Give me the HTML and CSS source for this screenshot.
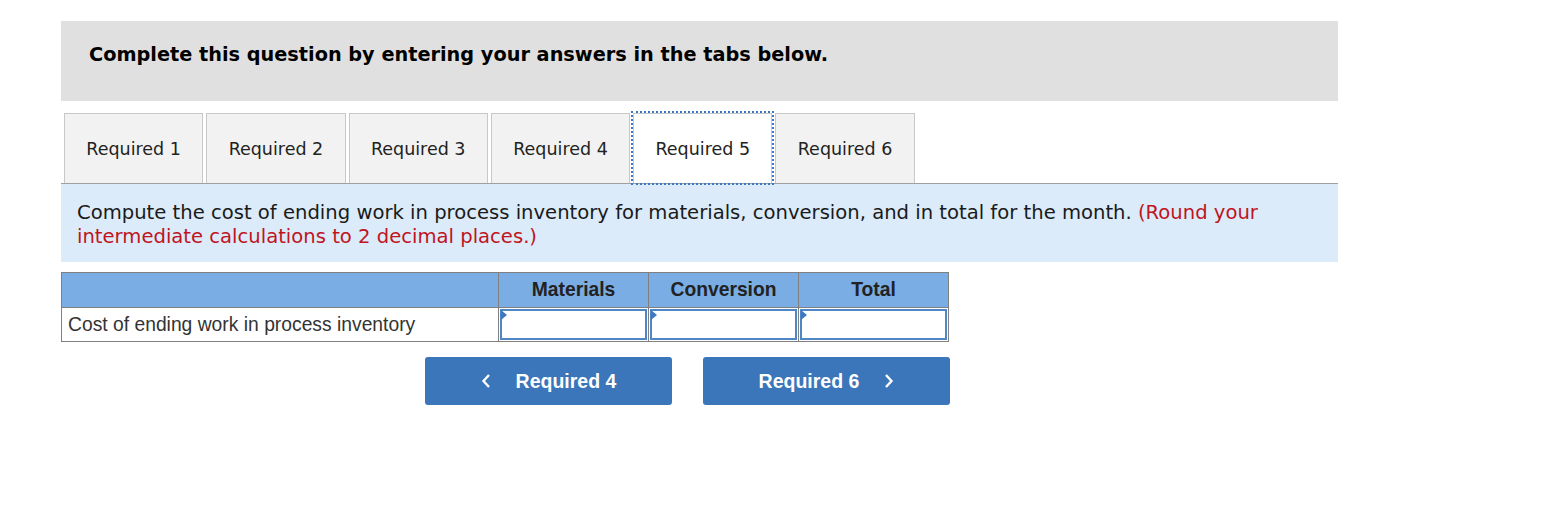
FILE: index.html
```html
<!DOCTYPE html>
<html>
<head>
<meta charset="utf-8">
<link rel="stylesheet" href="styles.css">
</head>
<body>
<div class="page">
  <div class="banner">Complete this question by entering your answers in the tabs below.</div>
  <div class="tabs">
    <div class="tab">Required 1</div>
    <div class="tab">Required 2</div>
    <div class="tab">Required 3</div>
    <div class="tab">Required 4</div>
    <div class="tab active">Required 5</div>
    <div class="tab">Required 6</div>
  </div>
  <div class="info">
    <p>Compute the cost of ending work in process inventory for materials, conversion, and in total for the month. <span class="red">(Round your intermediate calculations to 2 decimal places.)</span></p>
  </div>
  <table class="grid">
    <tr class="head">
      <th class="label"></th>
      <th>Materials</th>
      <th>Conversion</th>
      <th>Total</th>
    </tr>
    <tr class="row">
      <td class="label">Cost of ending work in process inventory</td>
      <td class="cell"><div class="input"><span class="flag"></span></div></td>
      <td class="cell"><div class="input"><span class="flag"></span></div></td>
      <td class="cell"><div class="input"><span class="flag"></span></div></td>
    </tr>
  </table>
  <div class="nav">
    <div class="btn prev">
      <svg class="chev" width="10" height="16" viewBox="0 0 10 16"><path d="M8 2 L2.5 8 L8 14" fill="none" stroke="#fff" stroke-width="2.4"/></svg>
      <span>Required 4</span>
    </div>
    <div class="btn next">
      <span>Required 6</span>
      <svg class="chev" width="10" height="16" viewBox="0 0 10 16"><path d="M2 2 L7.5 8 L2 14" fill="none" stroke="#fff" stroke-width="2.4"/></svg>
    </div>
  </div>
</div>
</body>
</html>
```
FILE: styles.css
```css
html, body {
  margin: 0;
  padding: 0;
  background: #fff;
}
.page {
  width: 1277px;
  margin-left: 61px;
  padding-top: 21px;
  font-family: "DejaVu Sans", Verdana, sans-serif;
}
.banner {
  height: 80px;
  box-sizing: border-box;
  background: #e0e0e0;
  padding: 22px 0 0 28px;
  font-weight: bold;
  font-size: 19.3px;
  line-height: 24px;
  color: #000;
}
.tabs {
  display: flex;
  margin-top: 12px;
  padding-left: 3px;
  gap: 3px;
  border-bottom: 1px solid #a0a0a0;
  height: 70px;
}
.tab {
  box-sizing: border-box;
  height: 70px;
  padding: 0 21.35px;
  border: 1px solid #c8c8c8;
  border-bottom: none;
  background: #f2f2f2;
  font-size: 17.5px;
  color: #222;
  display: flex;
  align-items: center;
}
.tab.active {
  background: #fff;
  outline: 2px dotted #3c78c3;
  outline-offset: 0px;
  position: relative;
  z-index: 1;
}
.info {
  background: #dbebf9;
  height: 78px;
  box-sizing: border-box;
  padding: 17px 16px 0 16px;
}
.info p {
  margin: 0;
  font-size: 19.6px;
  line-height: 24px;
  color: #1a1a1a;
}
.red {
  color: #c0141e;
}
.grid {
  margin-top: 10px;
  border-collapse: collapse;
  font-family: "Liberation Sans", Arial, sans-serif;
  font-size: 19.3px;
}
.grid th, .grid td {
  border: 1px solid #808080;
  padding: 0;
}
.head th {
  background: #79ade4;
  height: 34px;
  font-weight: bold;
  color: #222;
  text-align: center;
  width: 149px;
}
.head th.label {
  width: 436px;
}
.row td {
  height: 33px;
}
.row td.label {
  color: #333;
  padding-left: 6px;
  text-align: left;
}
.input {
  position: relative;
  margin: 1px;
  border: 2px solid #4f86c6;
  box-sizing: border-box;
  height: 31px;
  background: #fff;
}
.flag {
  position: absolute;
  left: -1px;
  top: -1px;
  width: 0;
  height: 0;
  border-top: 5px solid transparent;
  border-bottom: 5px solid transparent;
  border-left: 6px solid #3c78c3;
}
.nav {
  display: flex;
  gap: 31px;
  margin-top: 15px;
  padding-left: 364px;
}
.btn {
  width: 247px;
  height: 48px;
  box-sizing: border-box;
  background: #3a76b9;
  border-radius: 3px;
  color: #fff;
  font-family: "Liberation Sans", Arial, sans-serif;
  font-weight: bold;
  font-size: 19.5px;
  display: flex;
  align-items: center;
  justify-content: center;
  gap: 25px;
}
```
